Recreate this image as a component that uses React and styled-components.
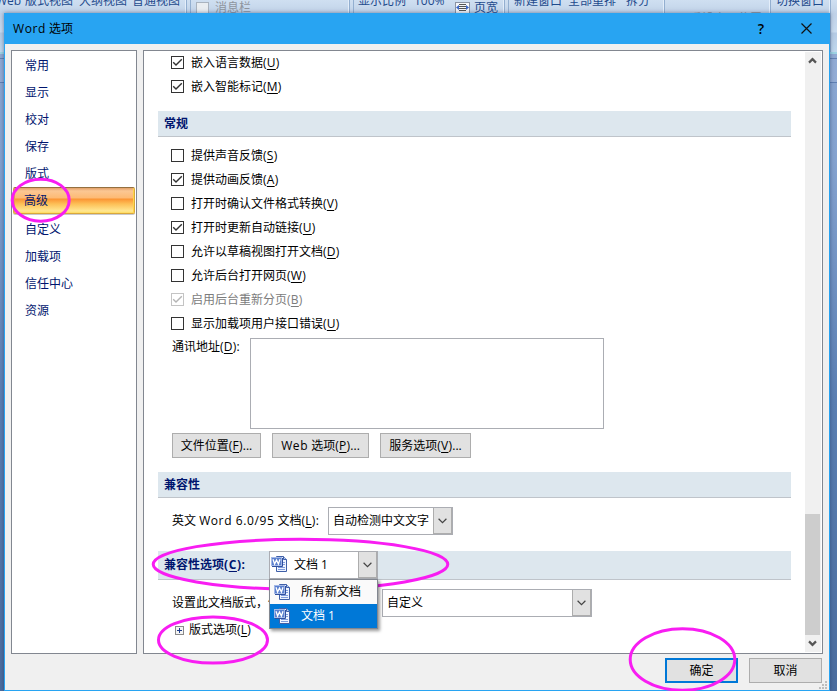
import React, { useState } from "react";
import styled, { createGlobalStyle } from "styled-components";

const categories = ["常用", "显示", "校对", "保存", "版式", "高级", "自定义", "加载项", "信任中心", "资源"];

const embedOptions = [
  { label: "嵌入语言数据", hotkey: "U", checked: true },
  { label: "嵌入智能标记", hotkey: "M", checked: true },
];

const generalOptions = [
  { label: "提供声音反馈", hotkey: "S" },
  { label: "提供动画反馈", hotkey: "A", checked: true },
  { label: "打开时确认文件格式转换", hotkey: "V" },
  { label: "打开时更新自动链接", hotkey: "U", checked: true },
  { label: "允许以草稿视图打开文档", hotkey: "D" },
  { label: "允许后台打开网页", hotkey: "W" },
  { label: "启用后台重新分页", hotkey: "B", checked: true, disabled: true },
  { label: "显示加载项用户接口错误", hotkey: "U" },
];

function Hotkey({ k }) {
  return (
    <Key>
      (<u>{k}</u>)
    </Key>
  );
}

function CheckRow({ option }) {
  const [checked, setChecked] = useState(!!option.checked);
  return (
    <Check $disabled={option.disabled} onClick={() => !option.disabled && setChecked(!checked)}>
      <CheckBox $disabled={option.disabled}>
        {checked && (
          <svg width="11" height="11" viewBox="0 0 11 11" fill="none">
            <path d="M1.2 5.3 4 8.1 9.8 2.3" stroke="currentColor" strokeWidth="1.4" />
          </svg>
        )}
      </CheckBox>
      <CheckLabel>
        {option.label}
        <Hotkey k={option.hotkey} />
      </CheckLabel>
    </Check>
  );
}

function Chevron() {
  return (
    <svg width="9" height="6" viewBox="0 0 9 6" fill="none">
      <path d="M.6.8 4.5 4.6 8.4.8" stroke="#444" strokeWidth="1.2" />
    </svg>
  );
}

function ScrollArrow({ up }) {
  return (
    <svg width="9" height="7" viewBox="0 0 9 7" fill="none">
      <path d={up ? "M1 5.6 4.5 2.1 8 5.6" : "M1 1.4 4.5 4.9 8 1.4"} stroke="#555" strokeWidth="2.2" />
    </svg>
  );
}

function WordIcon() {
  return (
    <svg width="16" height="16" viewBox="0 0 16 16">
      <path d="M5.500.500h7l3 3v12h-10z" fill="#eef4ff" stroke="#3f5fa8" />
      <path d="M12.500.500v3h3" fill="#b5caf2" stroke="#3f5fa8" />
      <path d="M11 6.500h3M11 8.500h3M7 11.500h7M7 13.500h7" stroke="#7f9cdc" />
      <rect x=".5" y="1.500" width="10" height="8" fill="#5b80cf" stroke="#a3b8e6" />
      <path d="M1 10.500h10.500V2" fill="none" stroke="#2f4f9e" />
      <path d="M2 3.300 3.600 8 5.500 4 7.400 8 9 3.300" fill="none" stroke="#fff" strokeWidth="1.300" />
    </svg>
  );
}

function PageWidthIcon() {
  return (
    <svg width="15" height="14" viewBox="0 0 15 14">
      <rect x=".5" y=".5" width="14" height="15" fill="#f4f6fa" stroke="#8a93a3" />
      <path d="M4 2.500h7M4 4.500h7M4 6.500h7M4 8.500h7" stroke="#555" />
      <path d="M1 5.500 4 3v5zM14 5.500 11 3v5z" fill="#3c68c8" />
    </svg>
  );
}

export default function App() {
  const [active, setActive] = useState("高级");

  return (
    <Desktop>
      <GlobalStyle />
      <Ribbon>
        <RibbonGroup $width={187} $indent={-4}>
          <RibbonText $width={29}>Web</RibbonText>
          <RibbonText $width={54}>版式视图</RibbonText>
          <RibbonText $width={53}>大纲视图</RibbonText>
          <RibbonText>普通视图</RibbonText>
        </RibbonGroup>
        <RibbonGap />
        <RibbonGroup $width={159} $indent={5} $low>
          <RibbonCheck />
          <RibbonText $muted>消息栏</RibbonText>
        </RibbonGroup>
        <RibbonGap />
        <RibbonGroup $width={151} $indent={4}>
          <RibbonText $width={56}>显示比例</RibbonText>
          <RibbonText $width={41}>100%</RibbonText>
          <RibbonLow>
            <PageWidthIcon />
            <RibbonText>页宽</RibbonText>
          </RibbonLow>
        </RibbonGroup>
        <RibbonGap />
        <RibbonGroup $width={156} $indent={5}>
          <RibbonText $width={54}>新建窗口</RibbonText>
          <RibbonText $width={58}>全部重排</RibbonText>
          <RibbonText>拆分</RibbonText>
        </RibbonGroup>
        <RibbonGroup $width={106} $indent={25} $lowest>
          <RibbonText $muted>重设窗口位置</RibbonText>
        </RibbonGroup>
        <RibbonGroup $width={60} $indent={5}>
          <RibbonText>切换窗口</RibbonText>
        </RibbonGroup>
      </Ribbon>
      <RulerBand />

      <Dialog>
        <TitleBar>
          <span>
            <Latin>Word</Latin> 选项
          </span>
          <TitleActions>
            <HelpMark>?</HelpMark>
            <svg width="11" height="11" viewBox="0 0 11 11">
              <path d="M.5.5l10 10M10.500.5l-10 10" stroke="#111" strokeWidth="1.200" />
            </svg>
          </TitleActions>
        </TitleBar>

        <Body>
          <Sidebar>
            {categories.map((name) => (
              <Category key={name} $active={name === active} onClick={() => setActive(name)}>
                {name}
              </Category>
            ))}
          </Sidebar>

          <Panel>
            <Content>
              <CheckList $top={-1}>
                {embedOptions.map((o) => (
                  <CheckRow key={o.label} option={o} />
                ))}
              </CheckList>

              <Heading $top={12}>常规</Heading>
              <CheckList $top={7}>
                {generalOptions.map((o) => (
                  <CheckRow key={o.label} option={o} />
                ))}
              </CheckList>
              <AddressRow>
                <AddressLabel>
                  通讯地址
                  <Hotkey k="D" />:
                </AddressLabel>
                <AddressBox />
              </AddressRow>
              <ButtonRow>
                <Button $width={89}>
                  文件位置
                  <Hotkey k="F" />
                  ...
                </Button>
                <Button $width={97}>
                  <Latin>Web</Latin>&nbsp;选项
                  <Hotkey k="P" />
                  ...
                </Button>
                <Button $width={91}>
                  服务选项
                  <Hotkey k="V" />
                  ...
                </Button>
              </ButtonRow>

              <Heading $top={14}>兼容性</Heading>
              <FieldRow $top={9}>
                <FieldLabel $width={156}>
                  英文 <Latin>Word 6.0/95</Latin> 文档
                  <Hotkey k="L" />:
                </FieldLabel>
                <Select $width={125}>
                  <SelectValue>自动检测中文文字</SelectValue>
                  <SelectArrow>
                    <Chevron />
                  </SelectArrow>
                </Select>
              </FieldRow>

              <Heading $top={16} $tall>
                <HeadingLabel>
                  兼容性选项
                  <Hotkey k="C" />:
                </HeadingLabel>
                <Select $width={109}>
                  <SelectValue $icon>
                    <WordIcon />
                    文档 1
                  </SelectValue>
                  <SelectArrow>
                    <Chevron />
                  </SelectArrow>
                  <Menu>
                    <MenuItem>
                      <WordIcon />
                      所有新文档
                    </MenuItem>
                    <MenuItem $selected>
                      <WordIcon />
                      文档 1
                    </MenuItem>
                  </Menu>
                </Select>
              </Heading>

              <FieldRow $top={9}>
                <FieldLabel $width={210}>设置此文档版式，使</FieldLabel>
                <Select $width={210}>
                  <SelectValue>自定义</SelectValue>
                  <SelectArrow>
                    <Chevron />
                  </SelectArrow>
                </Select>
              </FieldRow>
              <TreeRow>
                <svg width="9" height="9" viewBox="0 0 9 9">
                  <rect x=".5" y=".5" width="8" height="8" fill="#f4f4f4" stroke="#8a8a8a" />
                  <path d="M2 4.500h5M4.500 2v5" stroke="#1c3d8c" />
                </svg>
                <span>
                  版式选项
                  <Hotkey k="L" />
                </span>
              </TreeRow>
            </Content>

            <ScrollBar>
              <ScrollEnd>
                <ScrollArrow up />
              </ScrollEnd>
              <ScrollThumb />
              <ScrollEnd>
                <ScrollArrow />
              </ScrollEnd>
            </ScrollBar>
          </Panel>
        </Body>

        <Footer>
          <Button $width={73} $primary>
            确定
          </Button>
          <Button $width={73}>取消</Button>
        </Footer>
        <Grip width="9" height="9" viewBox="0 0 9 9">
          <path d="M6 0h2v2h-2zM3 3h2v2h-2zM6 3h2v2h-2zM0 6h2v2h-2zM3 6h2v2h-2zM6 6h2v2h-2z" fill="#bdbdbd" />
        </Grip>
      </Dialog>

      <Marks width="837" height="691" viewBox="0 0 837 691">
        <ellipse cx="40.700" cy="200.200" rx="28.500" ry="21" />
        <ellipse cx="300.500" cy="564.300" rx="147.300" ry="25" />
        <ellipse cx="213" cy="640" rx="54.500" ry="23" />
        <ellipse cx="682.500" cy="659.500" rx="52.300" ry="30.700" />
      </Marks>
    </Desktop>
  );
}

const GlobalStyle = createGlobalStyle`
  * {
    box-sizing: border-box;
  }
  body {
    margin: 0;
    overflow: hidden;
    font-family: "Open Sans", "Noto Sans CJK SC", sans-serif;
    font-size: 12px;
    line-height: 16px;
    color: #000;
  }
  svg {
    display: block;
    flex-shrink: 0;
  }
`;

const Desktop = styled.div`
  position: relative;
  width: 837px;
  height: 691px;
  overflow: hidden;
  background: linear-gradient(#8ba6d0 0, #94add6 82px, #8aa6d2 83px, #86a3d0 160px, #5b7fb3 400px, #4c6d9f);
`;

const Ribbon = styled.div`
  display: flex;
  height: 54px;
  overflow: hidden;
  background: linear-gradient(#cfdff1, #c0d2e8 14px, #c9dcf0 32px, #b5cbe5 33px, #c0d8ee);
  border-bottom: 2px solid #9fd4e4;
`;

const RibbonGroup = styled.div`
  display: flex;
  flex-shrink: 0;
  width: ${(p) => p.$width}px;
  height: 52px;
  padding-top: ${(p) => (p.$lowest ? 11 : 0)}px;
  border-right: 1px solid #93afd0;
  box-shadow: inset -1px 0 #e4eefa;
  > :first-child {
    margin-left: ${(p) => p.$indent}px;
  }
  > * {
    margin-top: ${(p) => (p.$low || p.$lowest ? 0 : -7)}px;
  }
`;

const RibbonGap = styled.div`
  flex-shrink: 0;
  width: 4px;
  height: 52px;
  border-right: 1px solid #93afd0;
`;

const RibbonText = styled.span`
  flex-shrink: 0;
  width: ${(p) => (p.$width ? p.$width + "px" : "auto")};
  color: ${(p) => (p.$muted ? "#8f959e" : "#1e4a8c")};
  white-space: nowrap;
`;

const RibbonCheck = styled.span`
  && {
    width: 13px;
    height: 13px;
    margin-top: 2px;
    margin-right: 6px;
    border: 1px solid #a9b3bf;
    background: #e9edf1;
  }
`;

const RibbonLow = styled.div`
  && {
    display: flex;
    gap: 4px;
    margin-top: 0;
  }
  svg {
    margin-top: 2px;
  }
`;

const RulerBand = styled.div`
  height: 29px;
  margin-top: 4px;
  border-top: 1px solid #6482b4;
  border-bottom: 1px solid #6080b4;
  height: 25px;
`;

const Dialog = styled.div`
  position: absolute;
  left: 4px;
  top: 13px;
  display: flex;
  flex-direction: column;
  width: 826px;
  height: 678px;
  border: 1px solid #28a4f2;
  background: #f0f0f0;
  box-shadow: 0 0 4px rgba(20, 40, 80, 0.5);
`;

const TitleBar = styled.div`
  display: flex;
  align-items: center;
  justify-content: space-between;
  height: 30px;
  padding: 0 13px 0 8px;
  background: #28a4f2;
`;

const Latin = styled.span`
  letter-spacing: 0.6px;
`;

const TitleActions = styled.div`
  display: flex;
  align-items: center;
  gap: 37px;
  padding-right: 4px;
  margin-top: -1px;
`;

const HelpMark = styled.span`
  font-size: 14px;
  font-weight: 600;
`;

const Body = styled.div`
  display: flex;
  gap: 6px;
  height: 610px;
  padding: 6px 6px 0;
`;

const Sidebar = styled.div`
  width: 126px;
  height: 604px;
  padding: 1px 1px 0;
  border: 1px solid #828790;
  background: #fff;
`;

const Category = styled.div`
  display: flex;
  align-items: center;
  height: 27px;
  padding-left: ${(p) => (p.$active ? 10 : 12)}px;
  color: #00156e;
  cursor: default;
  ${(p) =>
    p.$active &&
    `
    margin-bottom: 2px;
    border: 1px solid #d9a83c;
    border-top-color: #94703f;
    border-radius: 2px;
    background: linear-gradient(#e2a06a, #fbc793 3px, #fdba74 10px, #fb9434 11px, #fdc057 16px, #ffe793 23px, #ffdb5c);
    box-shadow: inset -1px 0 #ffd54a, inset 1px 0 #e9a04e, 0 1px #c9c9cc;
  `}
`;

const Panel = styled.div`
  display: flex;
  justify-content: space-between;
  width: 680px;
  height: 604px;
  padding: 1px 1px 1px 14px;
  border: 1px solid #828790;
  background: #fff;
`;

const Content = styled.div`
  width: 633px;
`;

const Key = styled.span`
  letter-spacing: 0.25px;
  u {
    text-underline-offset: 2px;
  }
`;

const CheckList = styled.div`
  margin-top: ${(p) => p.$top}px;
  padding-left: 13px;
`;

const Check = styled.div`
  display: flex;
  gap: 7px;
  height: 24px;
  color: ${(p) => (p.$disabled ? "#7c7c7c" : "#000")};
  cursor: default;
`;

const CheckBox = styled.span`
  width: 13px;
  height: 13px;
  margin-top: 5px;
  border: 1px solid ${(p) => (p.$disabled ? "#c4c4c4" : "#333")};
  color: ${(p) => (p.$disabled ? "#b4b4b4" : "#333")};
`;

const CheckLabel = styled.span`
  padding-top: 4px;
`;

const Heading = styled.div`
  display: flex;
  align-items: center;
  height: ${(p) => (p.$tall ? 29 : 26)}px;
  margin-top: ${(p) => p.$top}px;
  padding-left: 6px;
  border-bottom: 1px solid #bfc4ca;
  background: #dde7ee;
  color: #00156e;
  font-weight: bold;
`;

const HeadingLabel = styled.span`
  width: 105px;
  ${Key} {
    letter-spacing: 0.6px;
  }
`;

const AddressRow = styled.div`
  display: flex;
  margin-top: 2px;
  padding-left: 14px;
`;

const AddressLabel = styled.span`
  width: 78px;
  padding-top: 1px;
`;

const AddressBox = styled.div`
  width: 354px;
  height: 91px;
  border: 1px solid #abadb3;
`;

const ButtonRow = styled.div`
  display: flex;
  gap: 11px;
  margin-top: 4px;
  padding-left: 14px;
`;

const Button = styled.div`
  display: flex;
  align-items: center;
  justify-content: center;
  width: ${(p) => p.$width}px;
  height: 25px;
  border: ${(p) => (p.$primary ? "2px solid #0078d7" : "1px solid #adadad")};
  background: #e1e1e1;
  white-space: nowrap;
`;

const FieldRow = styled.div`
  display: flex;
  align-items: center;
  margin-top: ${(p) => p.$top}px;
  padding-left: 14px;
`;

const FieldLabel = styled.span`
  width: ${(p) => p.$width}px;
  white-space: nowrap;
`;

const Select = styled.div`
  position: relative;
  display: flex;
  width: ${(p) => p.$width}px;
  height: 28px;
  border: 1px solid #abadb3;
  background: #fff;
  color: #000;
  font-weight: normal;
`;

const SelectValue = styled.div`
  display: flex;
  flex: 1;
  align-items: center;
  gap: 7px;
  padding-left: ${(p) => (p.$icon ? 1 : 4)}px;
  white-space: nowrap;
  svg {
    margin-bottom: 2px;
  }
`;

const SelectArrow = styled.div`
  display: flex;
  align-items: center;
  justify-content: center;
  width: 19px;
  border: 1px solid #adadad;
  border-width: 0 1px 1px 1px;
  background: #e1e1e1;
`;

const Menu = styled.div`
  position: absolute;
  left: -1px;
  top: 27px;
  z-index: 1;
  width: 109px;
  border: 1px solid #828790;
  background: #fafafa;
  box-shadow: 2px 2px 3px rgba(0, 0, 0, 0.4);
`;

const MenuItem = styled.div`
  display: flex;
  align-items: center;
  gap: 11px;
  height: 24px;
  padding-left: 4px;
  background: ${(p) => (p.$selected ? "#0078d7" : "transparent")};
  color: ${(p) => (p.$selected ? "#fff" : "#000")};
  white-space: nowrap;
`;

const TreeRow = styled.div`
  display: flex;
  align-items: center;
  gap: 5px;
  margin-top: 5px;
  padding-left: 17px;
`;

const ScrollBar = styled.div`
  display: flex;
  flex-direction: column;
  width: 16px;
  background: #f0f0f0;
`;

const ScrollEnd = styled.div`
  display: flex;
  align-items: center;
  justify-content: center;
  height: 17px;
  padding-right: 1px;
`;

const ScrollThumb = styled.div`
  width: 15px;
  height: 121px;
  margin-top: auto;
  background: #cdcdcd;
`;

const Footer = styled.div`
  display: flex;
  justify-content: flex-end;
  gap: 11px;
  padding: 4px 7px 0 0;
`;

const Grip = styled.svg`
  position: absolute;
  right: 1px;
  bottom: 0;
`;

const Marks = styled.svg`
  position: absolute;
  inset: 0;
  pointer-events: none;
  fill: none;
  stroke: #f81df2;
  stroke-width: 3px;
`;
